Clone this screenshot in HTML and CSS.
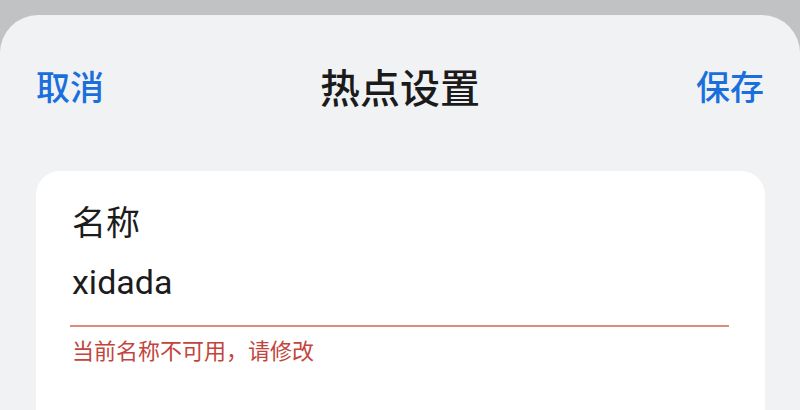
FILE: index.html
```html
<!DOCTYPE html>
<html lang="zh-CN">
<head>
<meta charset="utf-8">
<link rel="stylesheet" href="styles.css">
</head>
<body>
<div class="sheet">
  <div class="header">
    <span class="action">取消</span>
    <span class="title">热点设置</span>
    <span class="action">保存</span>
  </div>
  <div class="card">
    <div class="label">名称</div>
    <div class="value">xidada</div>
    <div class="underline"></div>
    <div class="error">当前名称不可用，请修改</div>
  </div>
</div>
</body>
</html>
```
FILE: styles.css
```css
html, body {
  margin: 0;
  padding: 0;
}
body {
  background: #c1c2c4;
  width: 800px;
  height: 410px;
  overflow: hidden;
  font-family: Roboto, "Noto Sans CJK SC", sans-serif;
}
.sheet {
  margin-top: 15px;
  background: #f1f2f4;
  border-radius: 38px 38px 0 0;
  height: 395px;
  overflow: hidden;
}
.header {
  display: flex;
  justify-content: space-between;
  align-items: center;
  padding: 38px 36px 0 36px;
  height: 66px;
}
.action {
  font-family: "Noto Sans CJK SC", sans-serif;
  font-size: 34px;
  line-height: 66px;
  font-weight: 500;
  color: #1a6fdc;
}
.title {
  font-family: "Noto Sans CJK SC", sans-serif;
  font-size: 40px;
  line-height: 66px;
  font-weight: 500;
  color: #1b1b1b;
}
.card {
  margin: 52px 35px 0 36px;
  background: #ffffff;
  border-radius: 24px 24px 0 0;
  height: 300px;
  padding: 29px 36px 0 36px;
}
.label {
  font-family: "Noto Sans CJK SC", sans-serif;
  font-size: 34px;
  line-height: 42px;
  color: #1c1c1c;
}
.value {
  margin-top: 20px;
  font-family: Roboto, sans-serif;
  font-size: 34px;
  line-height: 40px;
  color: #1c1c1c;
}
.underline {
  margin: 23px 0 0 -2px;
  height: 2px;
  background: #dd8a80;
}
.error {
  margin-top: 7px;
  font-family: "Noto Sans CJK SC", sans-serif;
  font-size: 22px;
  line-height: 30px;
  color: #c2453d;
}
```
